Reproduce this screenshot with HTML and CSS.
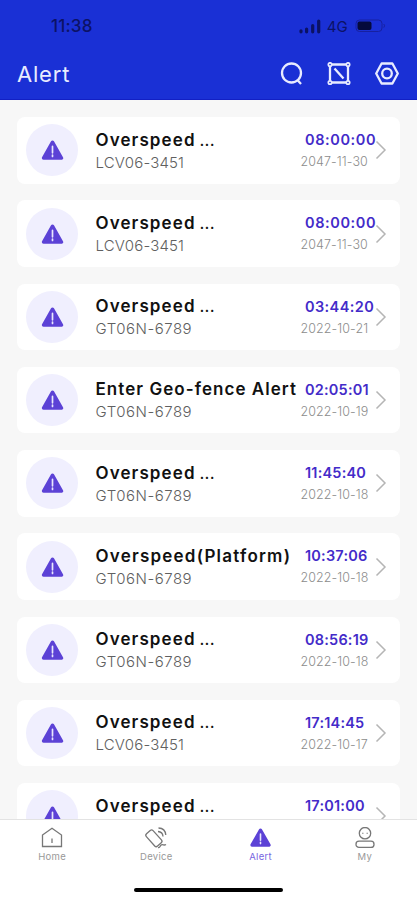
FILE: index.html
```html
<!DOCTYPE html>
<html lang="en">
<head>
<meta charset="utf-8">
<meta name="viewport" content="width=device-width, initial-scale=1">
<title>Alert</title>
<link rel="stylesheet" href="styles.css">
</head>
<body>
<svg width="0" height="0" class="defs" aria-hidden="true">
  <symbol id="warn" viewBox="0 0 22 20">
    <path d="M11 2.2 20 18H2Z" fill="currentColor" stroke="currentColor" stroke-width="3.4" stroke-linejoin="round"/>
    <path d="M11 6.4v6.4M11 15v1.4" stroke="#e9e7fd" stroke-width="1.7" stroke-linecap="round"/>
  </symbol>
  <symbol id="chevron" viewBox="0 0 12 20"><path d="M1.5 1.5 10 10 1.5 18.500" fill="none" stroke="#b5b5b5" stroke-width="1.5"/></symbol>
</svg>
<div class="screen">
  <header class="header">
    <div class="status">
      <span class="clock">11:38</span>
      <svg class="signal" width="22" height="15" viewBox="0 0 22 15"><path d="M2 11.800v1M7.600 10V12.800M13.700 6.500V12.800M19.700 2V12.800" stroke="#0b1264" stroke-width="3.2" stroke-linecap="round"/></svg>
      <span class="network">4G</span>
      <svg class="battery" width="31" height="14" viewBox="0 0 31 14"><rect x="1" y="1" width="26" height="11.500" rx="3.500" fill="none" stroke="#1720a0"/><rect x="2.500" y="2.500" width="14" height="8.500" rx="2" fill="#050a3c"/><path d="M28.800 5q1.500 1.800 0 3.600" stroke="#1720a0" fill="none"/></svg>
    </div>
    <div class="bar">
      <h1>Alert</h1>
      <svg class="tool" width="24" height="24" viewBox="0 0 24 24"><circle cx="11.500" cy="11" r="9.500"/><path d="m17 17.500 4 4.500"/></svg>
      <svg class="tool" width="24" height="24" viewBox="0 0 24 24"><path d="M3 2.500h18v18H3zM7.500 6.500l9 10"/><g fill="#1a30d5" stroke-width="1.700"><circle cx="3" cy="2.500" r="1.700"/><circle cx="21" cy="2.500" r="1.700"/><circle cx="3" cy="20.500" r="1.700"/><circle cx="21" cy="20.500" r="1.700"/></g></svg>
      <svg class="tool" width="24" height="24" viewBox="0 0 24 24"><path d="M6.600 1.500h10.800L22.800 11.500l-5.400 10H6.600L1.200 11.500Z" stroke-linejoin="round"/><circle cx="12" cy="11.500" r="4.800"/></svg>
    </div>
  </header>
  <main class="list">
    <article class="card"><div class="badge"><svg><use href="#warn"/></svg></div><div class="info"><h2>Overspeed <i>...</i></h2><p class="lcv">LCV06-3451</p></div><div class="when"><time class="t0">08:00:00</time><span>2047-11-30</span></div><svg class="chev"><use href="#chevron"/></svg></article>
    <article class="card"><div class="badge"><svg><use href="#warn"/></svg></div><div class="info"><h2>Overspeed <i>...</i></h2><p class="lcv">LCV06-3451</p></div><div class="when"><time class="t0">08:00:00</time><span>2047-11-30</span></div><svg class="chev"><use href="#chevron"/></svg></article>
    <article class="card"><div class="badge"><svg><use href="#warn"/></svg></div><div class="info"><h2>Overspeed <i>...</i></h2><p>GT06N-6789</p></div><div class="when"><time>03:44:20</time><span>2022-10-21</span></div><svg class="chev"><use href="#chevron"/></svg></article>
    <article class="card"><div class="badge"><svg><use href="#warn"/></svg></div><div class="info"><h2 class="geo">Enter Geo-fence Alert</h2><p>GT06N-6789</p></div><div class="when"><time class="narrow">02:05:01</time><span>2022-10-19</span></div><svg class="chev"><use href="#chevron"/></svg></article>
    <article class="card"><div class="badge"><svg><use href="#warn"/></svg></div><div class="info"><h2>Overspeed <i>...</i></h2><p>GT06N-6789</p></div><div class="when"><time class="narrow">11:45:40</time><span>2022-10-18</span></div><svg class="chev"><use href="#chevron"/></svg></article>
    <article class="card"><div class="badge"><svg><use href="#warn"/></svg></div><div class="info"><h2 class="plat">Overspeed(Platform)</h2><p>GT06N-6789</p></div><div class="when"><time class="narrow">10:37:06</time><span>2022-10-18</span></div><svg class="chev"><use href="#chevron"/></svg></article>
    <article class="card"><div class="badge"><svg><use href="#warn"/></svg></div><div class="info"><h2>Overspeed <i>...</i></h2><p>GT06N-6789</p></div><div class="when"><time class="narrow">08:56:19</time><span>2022-10-18</span></div><svg class="chev"><use href="#chevron"/></svg></article>
    <article class="card"><div class="badge"><svg><use href="#warn"/></svg></div><div class="info"><h2>Overspeed <i>...</i></h2><p class="lcv">LCV06-3451</p></div><div class="when"><time class="narrow">17:14:45</time><span>2022-10-17</span></div><svg class="chev"><use href="#chevron"/></svg></article>
    <article class="card"><div class="badge"><svg><use href="#warn"/></svg></div><div class="info"><h2>Overspeed <i>...</i></h2></div><div class="when"><time class="narrow">17:01:00</time></div><svg class="chev"><use href="#chevron"/></svg></article>
  </main>
  <footer class="footer">
    <nav class="tabs">
      <a><svg width="22" height="22" viewBox="0 0 22 22"><path d="M1.500 8 11 1.300 20.500 8V19.500h-19ZM11 11.500v4.500"/></svg><span>Home</span></a>
      <a><svg width="24" height="22" viewBox="0 0 24 22"><rect x="5.300" y="3.300" width="9" height="16.500" rx="2" transform="rotate(-42 9.500 11.300)"/><path d="M14 20.500c2.500.6 1.800-2.200 3.500-2.700s2.500 1 4.500-.3M14 4.500c3 .2 4.800 2 5 5M14.500 1c4.500.2 7 3 7.300 7"/></svg><span>Device</span></a>
      <a class="active"><svg width="21" height="22" viewBox="0 0 21 22"><use href="#warn" x="0" y="1" width="21" height="19"/></svg><span>Alert</span></a>
      <a><svg width="22" height="22" viewBox="0 0 22 22"><circle cx="11" cy="6.200" r="5.700"/><rect x="2" y="14.200" width="18" height="6.200" rx="3"/><path d="M8.800 5.800v1M13.200 5.800v1"/></svg><span>My</span></a>
    </nav>
    <div class="home-bar"></div>
  </footer>
</div>
</body>
</html>
```

FILE: styles.css
```css
* { box-sizing: border-box; }
body { margin: 0; background: #f7f7f7; font-family: Inter, "Liberation Sans", sans-serif; }
.defs { position: absolute; }
.screen { width: 417px; height: 900px; display: flex; flex-direction: column; overflow: hidden; }

.header { height: 100px; flex: none; background: #1a30d5; border-bottom: 1px solid #1220c4; }
.status { height: 50px; display: flex; align-items: center; padding: 2px 31px 0 51px; color: #0c1266; }
.clock { flex: 1; font-size: 17px; font-weight: 500; letter-spacing: .2px; }
.network { margin: 1px 7px 0 6px; font-size: 15px; letter-spacing: .2px; }
.battery { flex: none; }
.bar { height: 49px; display: flex; align-items: center; padding: 0 18.500px 2px 17px; gap: 23.500px; }
.bar h1 { flex: 1; margin: 0; font-size: 22px; font-weight: 400; letter-spacing: .8px; color: #e9ecff; }
.tool { fill: none; stroke: #e8ebff; stroke-width: 2.3; }

.list { flex: 1; min-height: 0; overflow: hidden; padding: 17px 17px 0; display: flex; flex-direction: column; gap: 16.750px; }
.card { flex: none; height: 66.500px; display: flex; align-items: center; padding: 0 13px 0 9px; background: #fff; border-radius: 8px; }
.badge { width: 52px; height: 52px; flex: none; display: flex; align-items: center; justify-content: center; border-radius: 50%; background: #f0effe; color: #5c42d6; }
.badge svg { width: 23px; height: 20px; margin-top: 0; }
.info { flex: 1; min-width: 0; align-self: flex-start; padding: 11.500px 0 0 17.500px; white-space: nowrap; }
.info h2 { margin: 0; font-size: 17px; line-height: 22px; font-weight: 600; letter-spacing: 1.100px; color: #111; }
.info h2 i { margin-left: -1.500px; font-style: normal; font-weight: 400; letter-spacing: .2px; }
.info .geo { letter-spacing: 1.050px; }
.info .plat { letter-spacing: 1.220px; }
.info p { margin: 2px 0 0; font-size: 15px; line-height: 20px; font-weight: 300; letter-spacing: .5px; color: #606060; }
.info .lcv { letter-spacing: .15px; }
.when { width: 74.500px; flex: none; align-self: flex-start; padding-top: 13px; white-space: nowrap; }
.when time { display: block; margin-left: 4.500px; font-size: 14.500px; line-height: 20px; font-weight: 600; letter-spacing: .4px; color: #432bc9; }
.when .t0 { letter-spacing: .6px; }
.when .narrow { letter-spacing: .2px; }
.when span { display: block; margin-top: 3px; font-size: 12.500px; line-height: 18px; font-weight: 300; letter-spacing: .08px; color: #8c8c8c; }
.chev { width: 12px; height: 20px; flex: none; }

.footer { height: 81px; flex: none; background: #fff; border-top: 1px solid #e3e3e3; }
.tabs { height: 66px; display: grid; grid-template-columns: repeat(4, 1fr); align-items: start; padding-top: 7px; }
.tabs a { display: flex; flex-direction: column; align-items: center; gap: 2px; font-size: 9.500px; line-height: 12px; letter-spacing: .3px; color: #999; }
.tabs svg { fill: none; stroke: #777; stroke-width: 1.300; }
.tabs .active { color: #7866df; }
.tabs .active svg { stroke: none; color: #5c42d6; }
.home-bar { width: 149px; height: 4px; margin: 2px auto 0; border-radius: 2px; background: #000; }
```
